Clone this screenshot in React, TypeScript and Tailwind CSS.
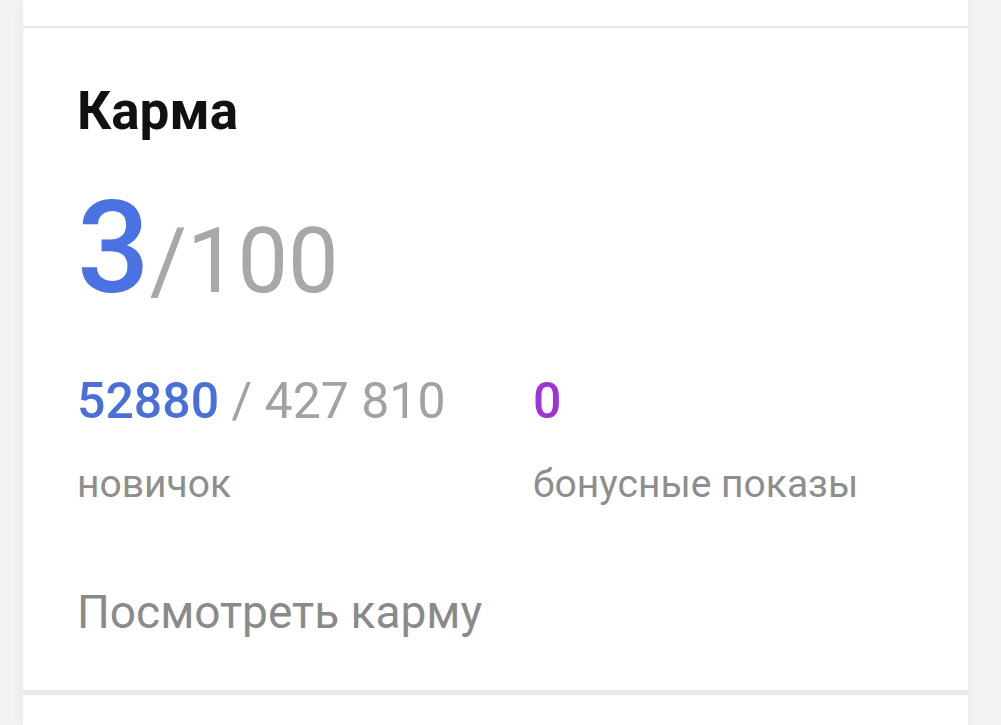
export default function App() {
  return (
    <main
      className="min-h-[725px] w-full overflow-hidden bg-[#f3f3f3]"
      style={{ fontFamily: "Roboto, 'Noto Sans', sans-serif" }}
    >
      <div className="ml-[23px] w-[945px] shadow-[0_0_14px_rgba(0,0,0,0.05)]">
        {/* previous card tail */}
        <div className="h-[28px] border-b-2 border-[#e6e6e6] bg-white" />

        {/* karma card */}
        <section className="h-[667px] border-b-[5px] border-[#e8e8e8] bg-white pl-[54px] pt-[57px]">
          <h2 className="text-[53px] font-bold leading-none text-[#111]">Карма</h2>

          <div className="mt-[46px] leading-none">
            <span className="text-[128px] font-medium text-[#4a72e2]">3</span>
            <span className="text-[90px] text-[#a8a8a8]">/100</span>
          </div>

          <div className="mt-[64px] flex">
            <div className="w-[456px]">
              <p className="text-[50px] leading-none text-[#a2a2a2]">
                <span className="font-medium text-[#4b6fd8]">52880</span> / 427 810
              </p>
              <p className="mt-[39px] text-[39px] leading-none text-[#8e8e8e]">новичок</p>
            </div>
            <div>
              <p className="text-[50px] font-medium leading-none text-[#9d34d6]">0</p>
              <p className="mt-[39px] text-[39px] leading-none text-[#8e8e8e]">бонусные показы</p>
            </div>
          </div>

          <p className="mt-[85px] text-[46px] leading-none text-[#8a8a8a]">Посмотреть карму</p>
        </section>

        {/* next card head */}
        <div className="h-[40px] bg-white" />
      </div>
    </main>
  );
}
